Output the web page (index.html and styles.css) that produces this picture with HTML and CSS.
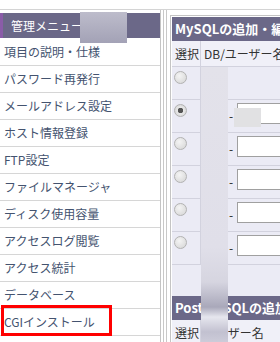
FILE: index.html
```html
<!DOCTYPE html>
<html lang="ja">
<head>
  <meta charset="UTF-8">
  <title>管理メニュー</title>
  <link rel="stylesheet" href="styles.css">
</head>
<body>
  <div class="page">
    <!-- 左メニュー -->
    <div class="side">
      <div class="side-head">管理メニュー<span class="mask mask-head"></span></div>
      <ul class="menu">
        <li>項目の説明・仕様</li>
        <li>パスワード再発行</li>
        <li>メールアドレス設定</li>
        <li>ホスト情報登録</li>
        <li>FTP設定</li>
        <li>ファイルマネージャ</li>
        <li>ディスク使用容量</li>
        <li>アクセスログ閲覧</li>
        <li>アクセス統計</li>
        <li>データベース</li>
        <li class="mark">CGIインストール<span class="red-box"></span></li>
      </ul>
    </div>

    <div class="gap"></div>

    <!-- 右パネル -->
    <div class="main">
      <div class="panel-head">MySQLの追加・編集</div>
      <div class="row row-title">
        <div class="col-sel">選択</div>
        <div class="col-name">DB/ユーザー名</div>
      </div>
      <div class="row">
        <div class="col-sel"><span class="radio"></span></div>
        <div class="col-name"></div>
      </div>
      <div class="row">
        <div class="col-sel"><span class="radio on"></span></div>
        <div class="col-name"><span class="dash">-</span><span class="field"></span><span class="mask mask-field"></span></div>
      </div>
      <div class="row">
        <div class="col-sel"><span class="radio"></span></div>
        <div class="col-name"><span class="dash">-</span><span class="field"></span></div>
      </div>
      <div class="row">
        <div class="col-sel"><span class="radio"></span></div>
        <div class="col-name"><span class="dash">-</span><span class="field"></span></div>
      </div>
      <div class="row">
        <div class="col-sel"><span class="radio"></span></div>
        <div class="col-name"><span class="dash">-</span><span class="field"></span></div>
      </div>
      <div class="row">
        <div class="col-sel"><span class="radio"></span></div>
        <div class="col-name"><span class="dash">-</span><span class="field"></span></div>
      </div>
      <div class="blank"></div>
      <div class="panel-head">PostgreSQLの追加・編集</div>
      <div class="row row-title">
        <div class="col-sel">選択</div>
        <div class="col-name">ユーザー名</div>
      </div>
      <span class="mask mask-strip"></span>
    </div>
  </div>
</body>
</html>
```

FILE: styles.css
```css
* {
  margin: 0;
  padding: 0;
  box-sizing: border-box;
}
body {
  font-family: "Noto Sans CJK JP", "Liberation Sans", sans-serif;
  font-size: 12px;
  color: #333;
  background-color: #fff;
  overflow: hidden;
}
.page {
  display: flex;
  margin-top: 9px;
  border-top: 1px solid #d4d4d4;
  height: 340px;
}

/* left menu */
.side {
  width: 161px;
  flex: none;
  border-right: 1px solid #c4c4c4;
  padding-top: 3px;
}
.side-head {
  position: relative;
  height: 25px;
  line-height: 25px;
  margin-bottom: 1px;
  padding-left: 8px;
  color: #fff;
  font-size: 12px;
  background-color: #6b6888;
  border-left: 3px solid #8a5ca8;
}
.menu {
  list-style: none;
}
.menu li {
  position: relative;
  height: 27px;
  line-height: 26px;
  padding-left: 4px;
  color: #44536f;
  border-bottom: 1px solid #d6d6d6;
}
.red-box {
  position: absolute;
  left: 1px;
  top: -4px;
  width: 111px;
  height: 31px;
  border: 3px solid #f00;
}

.gap {
  width: 9px;
  flex: none;
  padding: 0 2px 0 1px;
  background: linear-gradient(to right, transparent 2px, #c8c8c8 2px, #c8c8c8 3px, transparent 3px, transparent 5px, #c8c8c8 5px, #c8c8c8 6px, transparent 6px);
}

/* right panel */
.main {
  position: relative;
  flex: 1;
  margin-top: 5px;
  border-left: 1px solid #c4c4c4;
  border-top: 1px solid #c4c4c4;
  padding: 1px 0 0 1px;
  background-color: #fff;
}
.panel-head {
  height: 24px;
  line-height: 24px;
  padding-left: 3px;
  color: #fff;
  font-size: 13px;
  font-weight: bold;
  white-space: nowrap;
  overflow: hidden;
  background-color: #6b6888;
}
.row {
  display: flex;
  height: 33px;
  background-color: #ebebf5;
  border-bottom: 1px solid #d2d2de;
}
.row-title {
  height: 26px;
  line-height: 25px;
  background-color: #f0f0f8;
}
.col-sel {
  width: 29px;
  flex: none;
  padding: 4px 0 0 2px;
  border-right: 1px solid #d2d2de;
}
.row-title .col-sel {
  padding: 0 0 0 3px;
}
.col-name {
  position: relative;
  flex: 1;
  display: flex;
  align-items: flex-start;
  padding-left: 28px;
  white-space: nowrap;
  overflow: hidden;
}
.row-title .col-name {
  padding-left: 3px;
}
.radio {
  display: block;
  width: 13px;
  height: 13px;
  border-radius: 50%;
  border: 1px solid #b2b2b2;
  background: radial-gradient(circle at 40% 35%, #f4f4f4, #d4d4d4);
}
.radio.on {
  background: radial-gradient(circle, #555 0, #555 2.5px, #e8e8e8 3px, #d0d0d0);
}
.dash {
  width: 8px;
  margin-top: 8px;
  line-height: 16px;
  color: #222;
}
.field {
  display: block;
  width: 60px;
  height: 21px;
  margin-top: 3px;
  background-color: #fff;
  border: 1px solid #a0a0a0;
  border-right: none;
}
.blank {
  height: 31px;
  background-color: #ebebf5;
}

/* anonymised areas */
.mask {
  position: absolute;
  display: block;
}
.mask-head {
  left: 77px;
  top: -1px;
  width: 47px;
  height: 31px;
  background: linear-gradient(#bdbccb, #a3a2b6);
}
.mask-field {
  left: 33px;
  top: 8px;
  width: 27px;
  height: 19px;
  background-color: #e1e1e3;
}
.mask-strip {
  left: 30px;
  top: 51px;
  width: 27px;
  bottom: 0;
  background: linear-gradient(#e3e2ea 0, #e0dfe9 180px, #d6d5e0 215px, #a9a8ba 240px, #e6e6ee 250px, #c2c1d0 265px, #dcdbe6 290px);
}
```
